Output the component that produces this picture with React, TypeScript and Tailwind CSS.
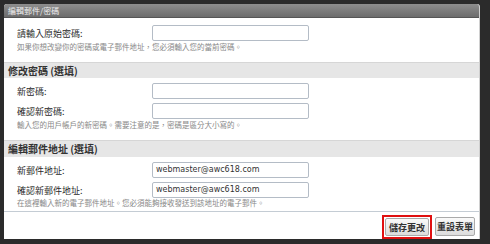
const FONT = "font-['Noto_Sans_CJK_TC','Noto_Sans',sans-serif]";

function Row({ label, value }: { label: string; value?: string }) {
  return (
    <div className="flex items-center h-[16px] shrink-0">
      <div className="w-[135px] text-[9px] text-[#2a2a2a] leading-none">{label}</div>
      <div className="w-[157px] h-[16px] border border-[#b4bcc6] rounded-[2px] bg-white flex items-center px-[3px] text-[8px] text-[#333] font-['DejaVu_Sans',sans-serif] leading-none">
        {value}
      </div>
    </div>
  );
}

function Help({ children, h = "h-[12px]" }: { children: string; h?: string }) {
  return (
    <div className={`${h} shrink-0 flex items-center text-[7.5px] text-[#888] leading-none`}>{children}</div>
  );
}

function Header({ title, tall }: { title: string; tall?: boolean }) {
  return (
    <div
      className={`${tall ? "h-[17px]" : "h-[16px]"} shrink-0 flex items-center pl-[4px] bg-[#e6e6e6] border-t border-[#d6d6d6] text-[10px] font-bold text-[#333] leading-none`}
    >
      {title}
    </div>
  );
}

const BTN =
  "text-[9px] font-bold text-[#333] bg-gradient-to-b from-[#fafafa] to-[#dcdcdc] border border-[#aaa] rounded-[2px] leading-none";

export default function App() {
  return (
    <div className={`w-[490px] h-[244px] bg-[#2b2b2b] pt-[4px] pl-[4px] pr-[10px] ${FONT}`}>
      <div className="w-[476px] h-[235px] bg-white rounded-t-[3px] border-r border-[#d0d0d0] flex flex-col overflow-hidden">
        <div className="h-[14px] shrink-0 bg-gradient-to-b from-[#8e8e8e] to-[#6c6c6c] flex items-center pl-[4px] text-[8px] text-[#eee] leading-none border-b border-[#555]">
          編輯郵件/密碼
        </div>

        <div className="h-[44px] shrink-0 pl-[13px] pt-[7px] flex flex-col">
          <Row label="請輸入原始密碼:" />
          <Help>如果你想改變你的密碼或電子郵件地址，您必須輸入您的當前密碼。</Help>
        </div>

        <Header title="修改密碼 (選填)" />
        <div className="h-[62px] shrink-0 pl-[13px] pt-[5px] flex flex-col">
          <Row label="新密碼:" />
          <div className="h-[4px] shrink-0" />
          <Row label="確認新密碼:" />
          <Help>輸入您的用戶帳戶的新密碼。需要注意的是，密碼是區分大小寫的。</Help>
        </div>

        <Header title="編輯郵件地址 (選填)" tall />
        <div className="h-[55px] shrink-0 pl-[13px] pt-[5px] border-b border-[#c4ccd4] flex flex-col">
          <Row label="新郵件地址:" value="webmaster@awc618.com" />
          <div className="h-[4px] shrink-0" />
          <Row label="確認新郵件地址:" value="webmaster@awc618.com" />
          <Help h="h-[10px]">在這裡輸入新的電子郵件地址。您必須能夠接收發送到該地址的電子郵件。</Help>
        </div>

        <div className="h-[27px] shrink-0 flex items-end justify-end pr-[4px]">
          <div className="flex items-center gap-[3px]">
            <div className="h-[24px] border-2 border-[#e01010] px-[1px] flex items-center">
              <button className={`${BTN} h-[18px] px-[3px]`}>儲存更改</button>
            </div>
            <button className={`${BTN} h-[19px] px-[1px] mb-[1px]`}>重設表單</button>
          </div>
        </div>
      </div>
    </div>
  );
}
